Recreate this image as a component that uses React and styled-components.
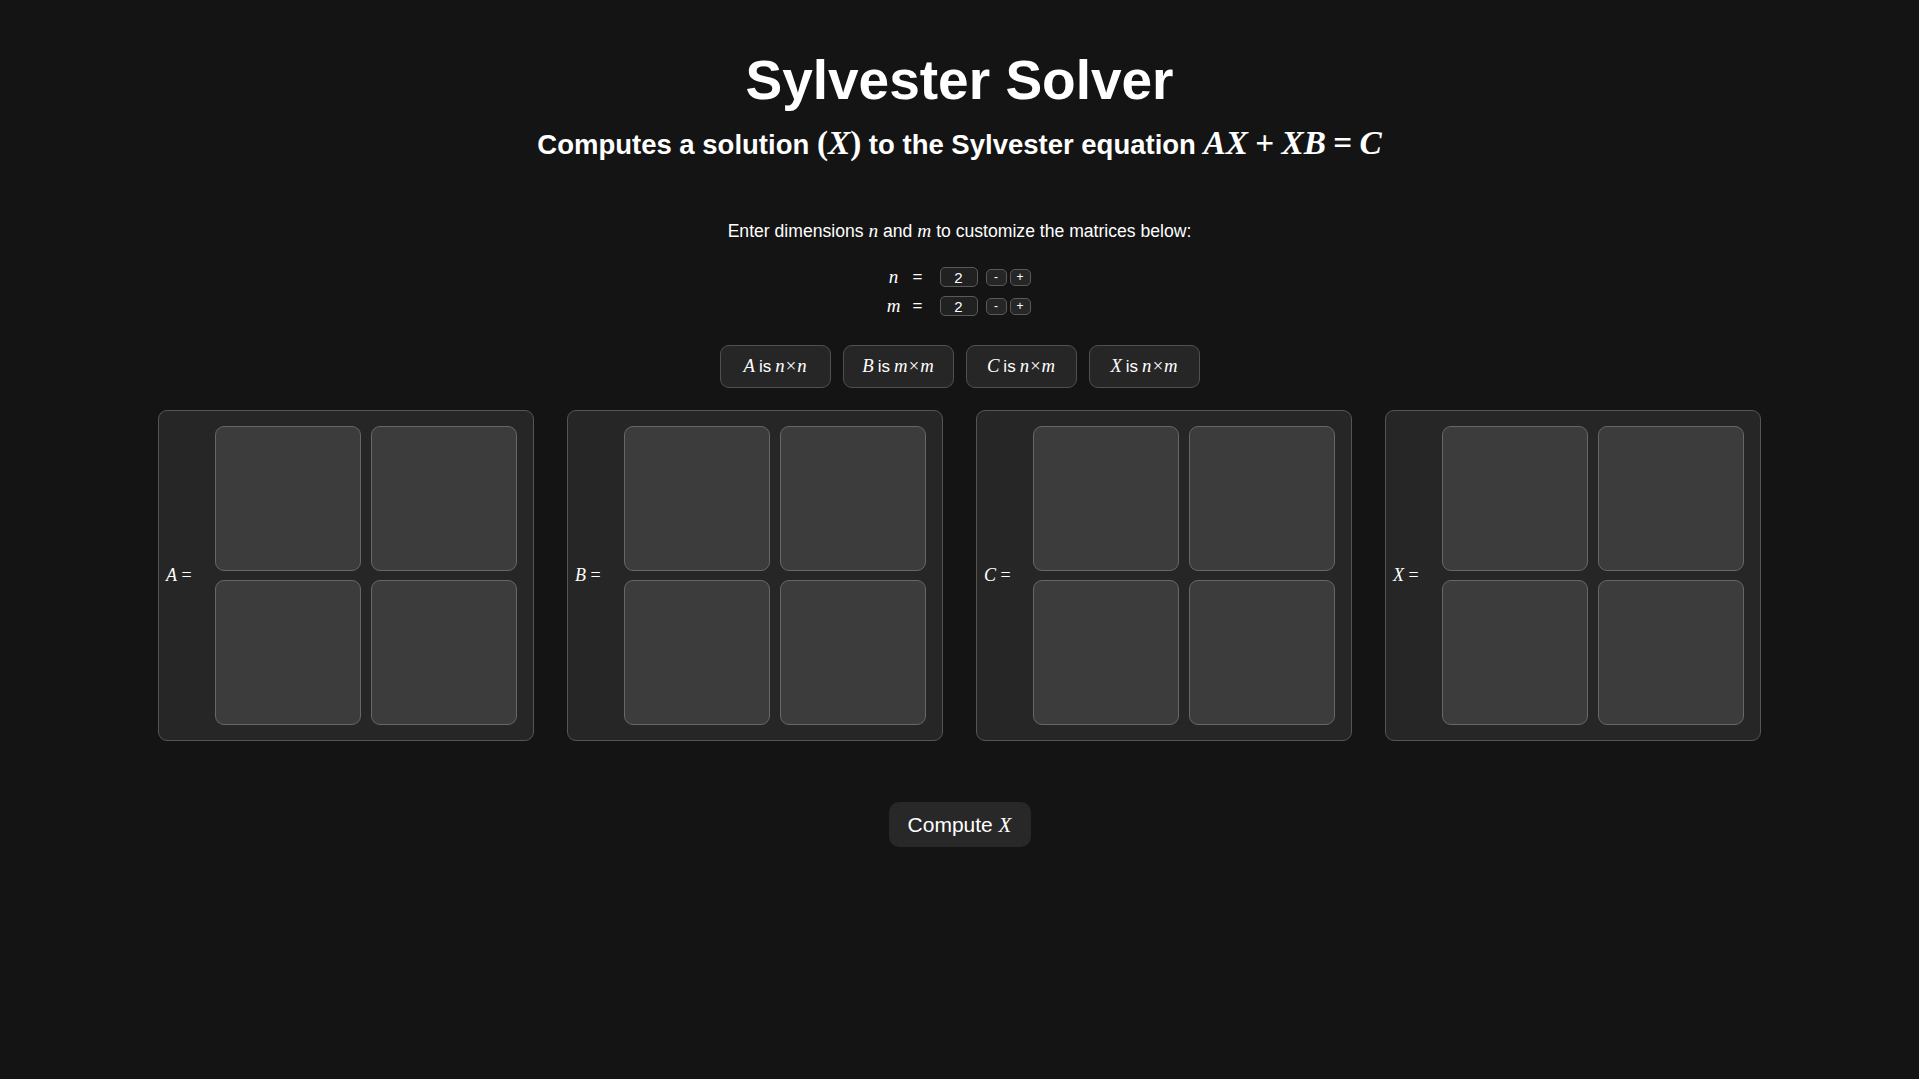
import React, { useState } from "react";
import styled, { createGlobalStyle } from "styled-components";

const GlobalStyle = createGlobalStyle`
    body {
        margin : 0;
        background : #141414;
        color : #ffffff;
        font-family : "Liberation Sans", Arial, sans-serif;
    }
`

const Page = styled.div`
    display : flex;
    flex-direction : column;
    align-items : center;
    min-height : 1079px;
`

const Title = styled.h1`
    margin : 48px 0 0;
    font-size : 55px;
    line-height : 64px;
    font-weight : 700;
`

const Subtitle = styled.h2`
    margin : 14px 0 0;
    font-size : 27.5px;
    line-height : 36px;
    font-weight : 700;
`

// math glyphs, serif italic like a TeX render
const M = styled.span`
    font-family : "Liberation Serif", "Times New Roman", serif;
    font-style : ${p => (p.$up ? "normal" : "italic")};
    font-weight : ${p => (p.$bold ? 700 : 400)};
    font-size : ${p => p.$size || "1.21em"};
    line-height : 1;
`

const Op = styled.span`
    font-family : "Liberation Serif", "Times New Roman", serif;
    font-weight : 700;
    font-size : 1.21em;
    line-height : 1;
    margin : 0 0.22em;
`

const Hint = styled.p`
    margin : 57px 0 0;
    font-size : 17.6px;
    line-height : 22px;
`

const DimGrid = styled.div`
    margin : 23px 7px 0 0;
    display : grid;
    grid-template-columns : 24px 24px 38px auto;
    grid-auto-rows : 24px;
    row-gap : 5px;
    align-items : center;
`

const DimLabel = styled.span`
    text-align : center;
    font-family : "Liberation Serif", serif;
    font-style : italic;
    font-size : 19px;
`

const Eq = styled.span`
    text-align : center;
    font-size : 17px;
`

const DimInput = styled.input`
    box-sizing : border-box;
    width : 38px;
    height : 20px;
    margin-left : 10px;
    background : #212121;
    border : 1px solid #5a5a5a;
    border-radius : 5px;
    color : #fff;
    text-align : center;
    font-family : "Liberation Sans", sans-serif;
    font-size : 15px;
    padding : 0;
`

const StepRow = styled.div`
    display : flex;
    gap : 3px;
    margin-left : 18px;
`

const StepBtn = styled.button`
    box-sizing : border-box;
    width : 21px;
    height : 17px;
    padding : 0;
    background : #262626;
    border : 1px solid #5a5a5a;
    border-radius : 5px;
    color : #fff;
    font-family : "Liberation Sans", sans-serif;
    font-size : 12px;
    line-height : 1;
`

const ShapeRow = styled.div`
    margin-top : 27px;
    display : flex;
    gap : 12px;
`

const ShapeTag = styled.div`
    box-sizing : border-box;
    width : 111px;
    height : 43px;
    display : flex;
    align-items : center;
    justify-content : center;
    gap : 4px;
    background : #262626;
    border : 1px solid #505050;
    border-radius : 9px;
    font-size : 17px;
`

const Panels = styled.div`
    margin-top : 22px;
    display : flex;
    gap : 33px;
`

const Panel = styled.div`
    box-sizing : border-box;
    width : 376px;
    height : 331px;
    display : flex;
    align-items : center;
    padding : 15px 16px 15px 7px;
    background : #262626;
    border : 1px solid #555;
    border-radius : 9px;
`

const PanelLabel = styled.div`
    width : 49px;
    flex : none;
    font-family : "Liberation Serif", serif;
    font-size : 18px;
    white-space : nowrap;
`

const Cells = styled.div`
    display : grid;
    grid-template-columns : repeat(${p => p.$cols}, 146px);
    grid-auto-rows : 145px;
    column-gap : 10px;
    row-gap : 9px;
`

const Cell = styled.textarea`
    box-sizing : border-box;
    resize : none;
    background : #3c3c3c;
    border : 1px solid #676767;
    border-radius : 9px;
    color : #fff;
    font-family : "Liberation Sans", sans-serif;
    font-size : 16px;
    outline : none;
`

const ComputeBtn = styled.button`
    margin-top : 61px;
    width : 142px;
    height : 45px;
    background : #282828;
    border : none;
    border-radius : 10px;
    color : #fff;
    font-family : "Liberation Sans", sans-serif;
    font-size : 21px;
`

const shapes = [
    ["A", "n", "n"],
    ["B", "m", "m"],
    ["C", "n", "m"],
    ["X", "n", "m"],
]

export default function App() {
    const [n, setN] = useState(2)
    const [m, setM] = useState(2)

    const dims = { A: [n, n], B: [m, m], C: [n, m], X: [n, m] }

    return (
        <>
            <GlobalStyle />
            <Page>
                <Title>Sylvester Solver</Title>
                <Subtitle>
                    Computes a solution <M $up $bold>(</M><M $bold>X</M><M $up $bold>)</M> to the Sylvester equation{" "}
                    <M $bold>AX</M><Op>+</Op><M $bold>XB</M><Op>=</Op><M $bold>C</M>
                </Subtitle>
                <Hint>
                    Enter dimensions <M $size="1.1em">n</M> and <M $size="1.1em">m</M> to customize the matrices below:
                </Hint>
                <DimGrid>
                    <DimLabel>n</DimLabel>
                    <Eq>=</Eq>
                    <DimInput value={n} readOnly />
                    <StepRow>
                        <StepBtn onClick={() => setN(Math.max(1, n - 1))}>-</StepBtn>
                        <StepBtn onClick={() => setN(n + 1)}>+</StepBtn>
                    </StepRow>
                    <DimLabel>m</DimLabel>
                    <Eq>=</Eq>
                    <DimInput value={m} readOnly />
                    <StepRow>
                        <StepBtn onClick={() => setM(Math.max(1, m - 1))}>-</StepBtn>
                        <StepBtn onClick={() => setM(m + 1)}>+</StepBtn>
                    </StepRow>
                </DimGrid>
                <ShapeRow>
                    {shapes.map(([name, r, c]) => (
                        <ShapeTag key={name}>
                            <M $size="1.1em">{name}</M>
                            <span>is</span>
                            <M $size="1.1em">{r}×{c}</M>
                        </ShapeTag>
                    ))}
                </ShapeRow>
                <Panels>
                    {shapes.map(([name]) => {
                        const [rows, cols] = dims[name]
                        return (
                            <Panel key={name}>
                                <PanelLabel><i>{name}</i> =</PanelLabel>
                                <Cells $cols={cols}>
                                    {Array.from({ length: rows * cols }).map((_, i) => (
                                        <Cell key={i} />
                                    ))}
                                </Cells>
                            </Panel>
                        )
                    })}
                </Panels>
                <ComputeBtn>
                    Compute <M $size="1em">X</M>
                </ComputeBtn>
            </Page>
        </>
    )
}
